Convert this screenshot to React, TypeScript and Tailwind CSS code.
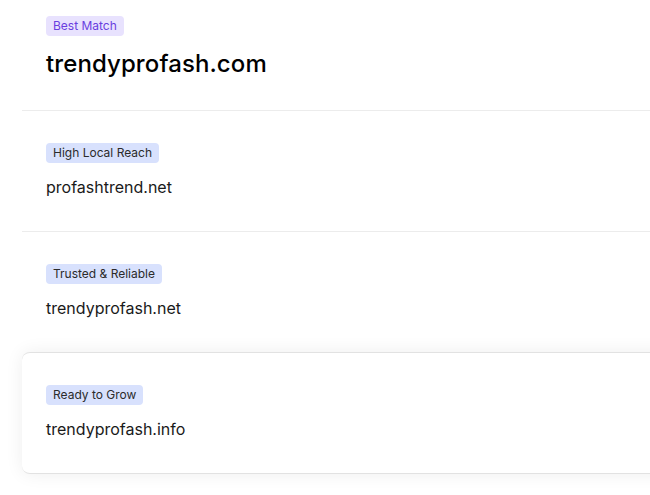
import React from "react";

const font = { fontFamily: "Inter, 'Noto Sans', sans-serif" };

function Badge({ text, purple }: { text: string; purple?: boolean }) {
  return (
    <span
      className={
        "inline-flex h-5 items-center rounded-[4px] px-[7px] text-[12px] leading-none " +
        (purple ? "bg-[#e8e2fe] text-[#6a3ee0]" : "bg-[#d8e1fd] text-[#2b2b2b]")
      }
    >
      {text}
    </span>
  );
}

function Row({ badge, domain }: { badge: string; domain: string }) {
  return (
    <div className="flex flex-col items-start px-6 py-8">
      <Badge text={badge} />
      <div className="mt-3 text-[16px] leading-6 text-[#1a1a1a]">{domain}</div>
    </div>
  );
}

export default function App() {
  return (
    <div className="h-[495px] w-[650px] overflow-hidden bg-white" style={font}>
      <div className="ml-[22px] w-[700px]">
        <div className="flex flex-col items-start px-6 pb-[30px] pt-4">
          <Badge text="Best Match" purple />
          <div className="mt-3 text-[24px] font-medium leading-8 tracking-[0.1px] text-black">
            trendyprofash.com
          </div>
        </div>
        <div className="h-px bg-[#ececec]" />
        <Row badge="High Local Reach" domain="profashtrend.net" />
        <div className="h-px bg-[#ececec]" />
        <Row badge="Trusted & Reliable" domain="trendyprofash.net" />
        <div className="rounded-l-lg border-y border-[#e2e2e2] bg-white shadow-[0_0_18px_rgba(0,0,0,0.07)]">
          <Row badge="Ready to Grow" domain="trendyprofash.info" />
        </div>
      </div>
    </div>
  );
}
